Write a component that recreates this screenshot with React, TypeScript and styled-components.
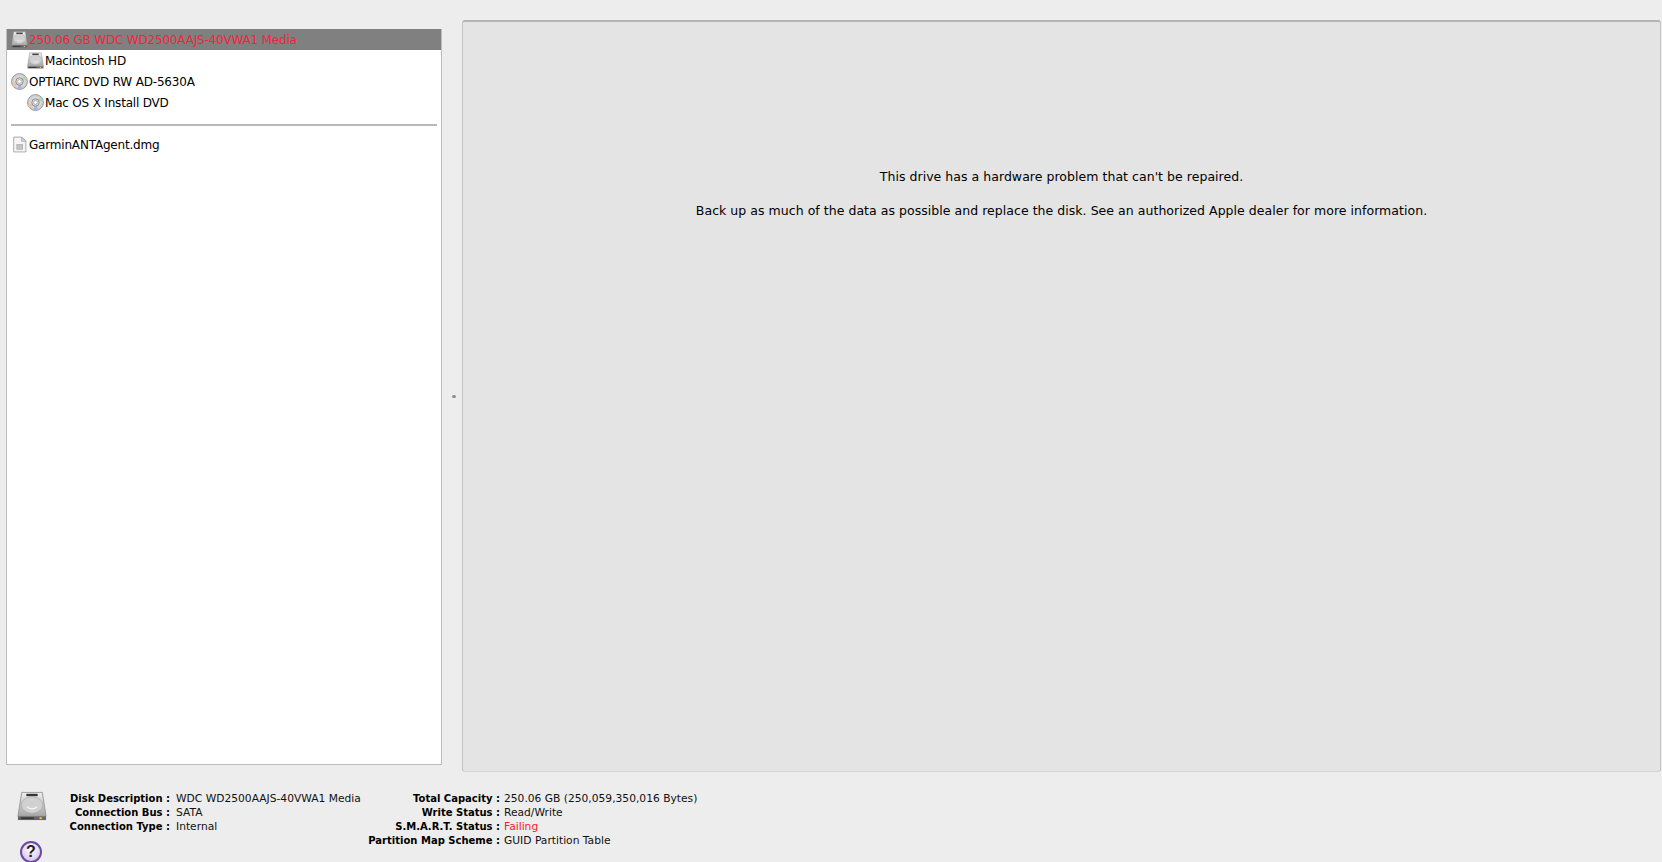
import React from "react";
import styled, { createGlobalStyle } from "styled-components";

const Global = createGlobalStyle`
  html, body { margin: 0; padding: 0; }
  body {
    width: 1662px; height: 862px; overflow: hidden; background: #ededed;
    font-family: "DejaVu Sans", "Liberation Sans", sans-serif; color: #000;
  }
`;

const Page = styled.div`
  width: 1662px; height: 862px; display: flex; flex-direction: column; background: #ededed; overflow: hidden;
`;
const Main = styled.main`
  display: flex; height: 752px; margin-top: 20px; padding-left: 6px;
`;
const Sidebar = styled.aside`
  box-sizing: border-box; width: 436px; height: 736px; margin-top: 9px; background: #fff;
  border: 1px solid #bdbdbd; border-top: 0;
`;
const Row = styled.div<{ $indent?: boolean; $selected?: boolean }>`
  display: flex; align-items: center; height: 21px; gap: 1px;
  padding-left: ${(p) => (p.$indent ? "20px" : "4px")};
  background: ${(p) => (p.$selected ? "#808080" : "transparent")};
  color: ${(p) => (p.$selected ? "#f3233f" : "#000")};
  font-size: 12px; white-space: nowrap; letter-spacing: -0.19px;
`;
const Divider = styled.hr`
  height: 2px; border: 0; margin: 11px 4px 8px 4px; background: #b9b9b9;
`;
const Gutter = styled.div`
  width: 20px; flex: none; display: flex; align-items: center; justify-content: center;
`;
const Handle = styled.span`
  width: 4px; height: 3px; margin-left: 4px; border-radius: 50%; background: #8a8a8a;
`;
const Detail = styled.section`
  box-sizing: border-box; width: 1199px; height: 752px; padding-top: 146px;
  background: #e4e4e4; text-align: center; border-radius: 3px;
  border: 1px solid #d4d4d4; border-top: 2px solid #b4b4b4; border-left-color: #c4c4c4; border-right-color: #c4c4c4;
`;
const Message = styled.p`
  margin: 0 0 17px; font-size: 12.5px; line-height: 17px; letter-spacing: 0.04px; color: #000;
`;
const Footer = styled.footer`
  display: grid; grid-template-columns: 45px 303px auto; padding: 19px 0 0 17px; height: 71px; box-sizing: border-box;
`;
const IconColumn = styled.div`
  display: flex; flex-direction: column; align-items: flex-start; gap: 20px;
`;
const HelpButton = styled.div`
  box-sizing: border-box; width: 22px; height: 22px; margin-left: 3px; border-radius: 50%;
  border: 2px solid #6b4aa0; background: radial-gradient(circle at 50% 35%, #ffffff, #cdb8ec);
  display: flex; align-items: center; justify-content: center;
  font-family: "Liberation Sans", sans-serif; font-size: 16px; font-weight: 700; color: #222;
`;
const InfoTable = styled.dl<{ $label: number; $gap: number }>`
  margin: 0; padding-top: 1px; display: grid; grid-template-columns: ${(p) => p.$label}px auto; grid-auto-rows: 14px;
  column-gap: ${(p) => p.$gap}px; align-content: start; line-height: 14px; white-space: nowrap;
`;
const Label = styled.dt`
  font-size: 10px; font-weight: 700; text-align: right;
`;
const Value = styled.dd<{ $alert?: boolean }>`
  margin: 0; font-size: 10.7px; color: ${(p) => (p.$alert ? "#f6202f" : "#111")};
`;

function HardDisk({ size, id }: { size: number; id: string }) {
  return (
    <svg width={size} height={size} viewBox="0 0 32 32" style={{ flex: "none" }}>
      <defs>
        <linearGradient id={id} x1="0" y1="0" x2="0" y2="1">
          <stop offset="0" stopColor="#eeeeee" />
          <stop offset="1" stopColor="#a6a6a6" />
        </linearGradient>
      </defs>
      <path d="M5 1.500h22L31 27H1z" fill={`url(#${id})`} stroke="#868686" strokeWidth="0.8" />
      <rect x="10" y="3" width="12" height="2.500" fill="#333" />
      <ellipse cx="16" cy="15" rx="11.500" ry="9" fill="#d0d0d0" stroke="#a4a4a4" strokeWidth="0.7" />
      <path d="M11 16.500c2 3.500 8 3.500 10 0" fill="none" stroke="#f6f6f6" strokeWidth="1.400" />
      <rect x="1" y="27" width="30" height="4" fill="#666" />
      <rect x="4" y="28" width="14" height="2" fill="#3a3a3a" />
      <rect x="24" y="28" width="2.500" height="2" fill="#d9d14a" />
    </svg>
  );
}

function Disc({ id }: { id: string }) {
  return (
    <svg width={17} height={17} viewBox="0 0 32 32" style={{ flex: "none" }}>
      <defs>
        <radialGradient id={id}>
          <stop offset="0" stopColor="#f4f4f4" />
          <stop offset="1" stopColor="#c8c8c8" />
        </radialGradient>
      </defs>
      <circle cx="16" cy="16" r="15" fill={`url(#${id})`} stroke="#8b8b8b" strokeWidth="1.500" />
      <path d="M16 16 L26 5 A15 15 0 0 1 30 12 Z" fill="#a8d8b4" />
      <path d="M16 16 L6 27 A15 15 0 0 1 2 20 Z" fill="#eec39c" />
      <path d="M16 16 L21 29 A14 14 0 0 1 12 30 Z" fill="#a8b4e6" />
      <circle cx="16" cy="16" r="7" fill="#d8d8d8" stroke="#7d7d7d" strokeWidth="1.500" />
      <circle cx="16" cy="16" r="3.500" fill="#fff" stroke="#8b8b8b" />
    </svg>
  );
}

function DocumentIcon() {
  return (
    <svg width={17} height={17} viewBox="0 0 32 32" style={{ flex: "none" }}>
      <path d="M5 2h15l8 8v20H5z" fill="#f5f5f5" stroke="#9a9a9a" strokeWidth="1.500" />
      <path d="M20 2v8h8z" fill="#d5d5d5" stroke="#9a9a9a" strokeWidth="1.200" />
      <rect x="11" y="16" width="11" height="9" fill="#c4c4c4" stroke="#9a9a9a" />
    </svg>
  );
}

export default function App() {
  return (
    <Page>
      <Global />
      <Main>
        <Sidebar>
          <Row $selected><HardDisk size={17} id="hd-a" />250.06 GB WDC WD2500AAJS-40VWA1 Media</Row>
          <Row $indent><HardDisk size={17} id="hd-b" />Macintosh HD</Row>
          <Row><Disc id="dvd-a" />OPTIARC DVD RW AD-5630A</Row>
          <Row $indent><Disc id="dvd-b" />Mac OS X Install DVD</Row>
          <Divider />
          <Row><DocumentIcon />GarminANTAgent.dmg</Row>
        </Sidebar>
        <Gutter><Handle /></Gutter>
        <Detail>
          <Message>This drive has a hardware problem that can't be repaired.</Message>
          <Message>Back up as much of the data as possible and replace the disk. See an authorized Apple dealer for more information.</Message>
        </Detail>
      </Main>
      <Footer>
        <IconColumn>
          <HardDisk size={30} id="hd-c" />
          <HelpButton>?</HelpButton>
        </IconColumn>
        <InfoTable $label={108} $gap={6}>
          <Label>Disk Description :</Label><Value>WDC WD2500AAJS-40VWA1 Media</Value>
          <Label>Connection Bus :</Label><Value>SATA</Value>
          <Label>Connection Type :</Label><Value>Internal</Value>
        </InfoTable>
        <InfoTable $label={135} $gap={4}>
          <Label>Total Capacity :</Label><Value>250.06 GB (250,059,350,016 Bytes)</Value>
          <Label>Write Status :</Label><Value>Read/Write</Value>
          <Label>S.M.A.R.T. Status :</Label><Value $alert>Failing</Value>
          <Label>Partition Map Scheme :</Label><Value>GUID Partition Table</Value>
        </InfoTable>
      </Footer>
    </Page>
  );
}
